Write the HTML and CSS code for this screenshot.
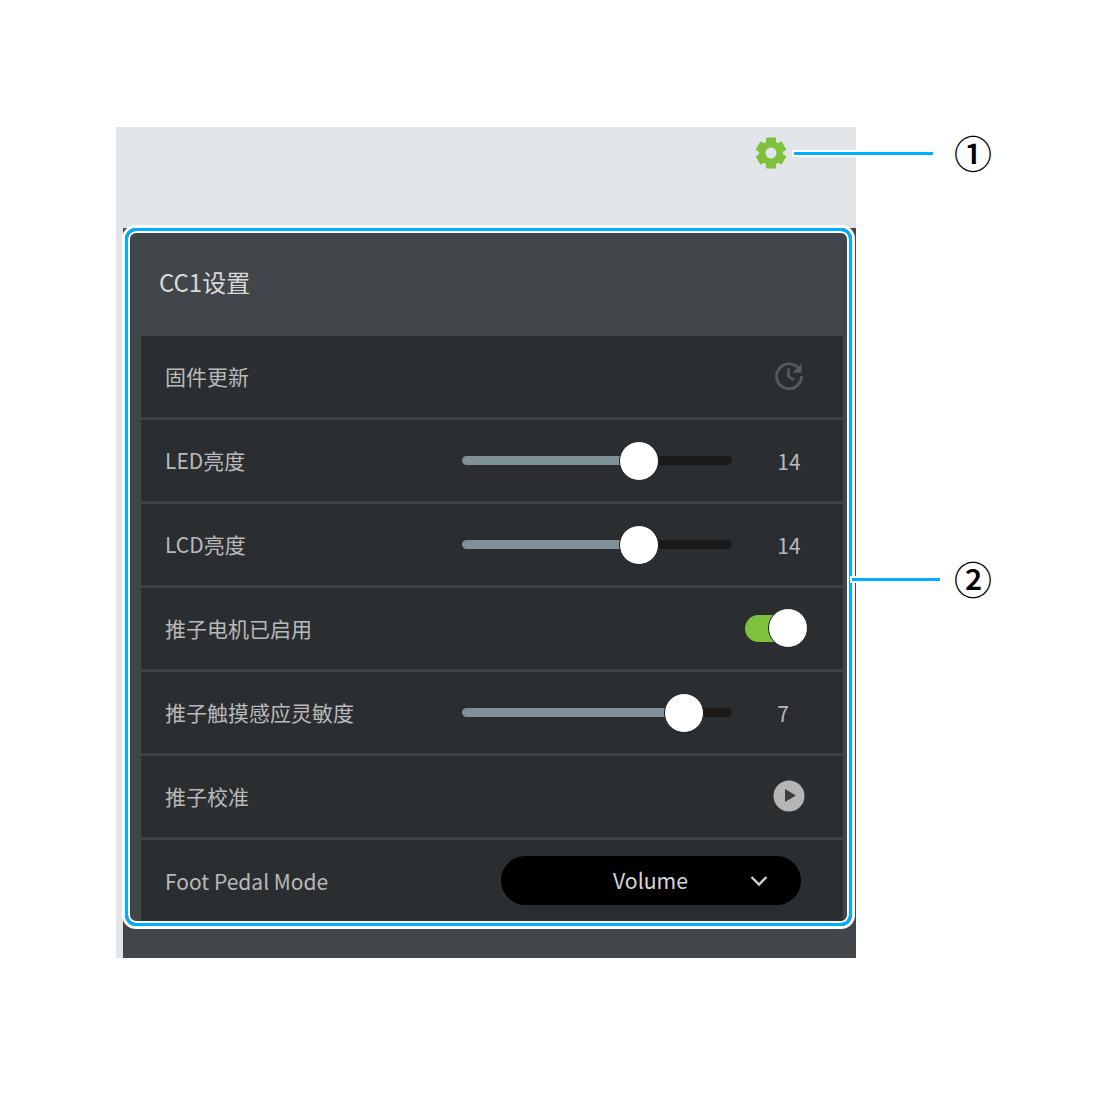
FILE: index.html
```html
<!DOCTYPE html>
<html lang="zh-CN">
    <head>
        <meta charset="UTF-8" />
        <title>CC1设置</title>
        <link rel="stylesheet" href="styles.css">
    </head>
    <body>
        <div class="pantalla">
            <div class="barra-superior">
                <svg class="engrane" viewBox="0 0 32 32">
                    <g fill="#7fc13c">
                        <circle cx="16" cy="16" r="12"/>
                        <rect x="11" y="0.500" width="10" height="31" rx="1"/>
                        <rect x="11" y="1" width="10" height="30" rx="1" transform="rotate(60 16 16)"/>
                        <rect x="11" y="1" width="10" height="30" rx="1" transform="rotate(120 16 16)"/>
                    </g>
                    <circle cx="16" cy="16" r="5.500" fill="#e2e5e8"/>
                </svg>
            </div>

            <div class="panel">
                <h1 class="titulo">CC1设置</h1>

                <div class="fila">
                    <span class="etiqueta">固件更新</span>
                    <svg class="icono-historial" viewBox="0 0 30 30">
                        <path d="M25.800 10.200A12.400 12.400 0 1 0 27.400 16" fill="none" stroke="#565a5d" stroke-width="2.800"/>
                        <path d="M27.700 3.500v9.300h-9.300z" fill="#565a5d"/>
                        <path d="M14.500 8.500v8l5.500 3.500" fill="none" stroke="#565a5d" stroke-width="2.600"/>
                    </svg>
                </div>

                <div class="fila">
                    <span class="etiqueta">LED亮度</span>
                    <div class="deslizador"><div class="relleno ancho-14"></div><div class="perilla"></div></div>
                    <span class="valor">14</span>
                </div>

                <div class="fila">
                    <span class="etiqueta">LCD亮度</span>
                    <div class="deslizador"><div class="relleno ancho-14"></div><div class="perilla"></div></div>
                    <span class="valor">14</span>
                </div>

                <div class="fila">
                    <span class="etiqueta">推子电机已启用</span>
                    <div class="interruptor"><div class="perilla"></div></div>
                </div>

                <div class="fila">
                    <span class="etiqueta">推子触摸感应灵敏度</span>
                    <div class="deslizador"><div class="relleno ancho-7"></div><div class="perilla"></div></div>
                    <span class="valor valor-corto">7</span>
                </div>

                <div class="fila">
                    <span class="etiqueta">推子校准</span>
                    <svg class="icono-play" viewBox="0 0 32 32">
                        <circle cx="16" cy="16" r="15.500" fill="#b5b5b5"/>
                        <path d="M12 9l11 6.500L12 22z" fill="#3a3d40"/>
                    </svg>
                </div>

                <div class="fila fila-ultima">
                    <span class="etiqueta">Foot Pedal Mode</span>
                    <div class="selector">
                        <span class="selector-texto">Volume</span>
                        <svg class="flecha" viewBox="0 0 18 12">
                            <path d="M1.500 2 9 9.500 16.500 2" fill="none" stroke="#d0d0d0" stroke-width="2.400"/>
                        </svg>
                    </div>
                </div>
            </div>
        </div>

        <!-- anotaciones -->
        <div class="marco"></div>
        <div class="linea linea-1"></div>
        <div class="linea linea-2"></div>
        <span class="numero numero-1">①</span>
        <span class="numero numero-2">②</span>
    </body>
</html>
```

FILE: styles.css
```css
* {
    box-sizing: border-box;
    margin: 0;
    padding: 0;
}

html {
    background: white;
}

body {
    position: relative;
    height: 1110px;
    overflow: hidden;
    font-family: "Noto Sans CJK SC", "Noto Sans", sans-serif;
}

.pantalla {
    display: flex;
    flex-direction: column;
    width: 740px;
    height: 831px;
    margin: 127px 0 0 116px;
    background: #e2e5e8;
}

.barra-superior {
    display: flex;
    justify-content: flex-end;
    flex-shrink: 0;
    height: 101px;
    padding: 10px 69px 0 0;
}

.engrane {
    width: 32px;
    height: 32px;
}

.panel {
    flex: 1;
    margin-left: 7px;
    padding: 7px 13px 0 18px;
    background: #41464a;
}

.titulo {
    height: 101px;
    margin-left: -18px;
    padding-left: 36px;
    font-size: 24px;
    font-weight: 400;
    line-height: 94px;
    color: #d9d9d9;
}

.fila {
    display: flex;
    align-items: center;
    height: 84px;
    padding: 0 34px 1px 24px;
    background: #2b2e31;
    border-bottom: 3px solid #3e4246;
}

.fila-ultima {
    height: 81px;
    padding: 0 42px 0 24px;
    border-bottom: none;
}

.etiqueta {
    margin-right: auto;
    font-size: 21px;
    color: #b9b9b9;
}

.valor {
    width: 40px;
    padding-top: 2px;
    font-size: 21px;
    text-align: center;
    color: #b9b9b9;
}

.valor-corto {
    padding-right: 12px;
}

.deslizador {
    position: relative;
    width: 270px;
    height: 9px;
    margin-right: 37px;
    background: #1a1a1a;
    border-radius: 5px;
}

.relleno {
    height: 100%;
    background: #7f9097;
    border-radius: 5px;
}

.ancho-14 {
    width: 177px;
}

.ancho-7 {
    width: 222px;
}

.perilla {
    position: absolute;
    top: -15px;
    width: 40px;
    height: 40px;
    background: white;
    border: 1px solid #1c1e20;
    border-radius: 50%;
}

.ancho-14 + .perilla {
    left: 157px;
}

.ancho-7 + .perilla {
    left: 202px;
}

.icono-historial {
    width: 30px;
    height: 30px;
    margin: 0 5px 2px 0;
}

.icono-play {
    width: 32px;
    height: 32px;
    margin-right: 4px;
}

.interruptor {
    position: relative;
    width: 50px;
    height: 27px;
    margin-right: 14px;
    background: #7fc13c;
    border-radius: 14px;
}

.interruptor .perilla {
    top: -7px;
    left: 23px;
}

.selector {
    display: flex;
    align-items: center;
    justify-content: space-between;
    width: 300px;
    height: 49px;
    padding: 0 33px 0 112px;
    background: black;
    border-radius: 25px;
}

.selector-texto {
    padding-bottom: 3px;
    font-size: 21.200px;
    color: #d6d6d6;
}

.flecha {
    width: 18px;
    height: 12px;
}

/* anotaciones */
.marco {
    position: absolute;
    top: 228px;
    left: 125px;
    width: 727px;
    height: 698px;
    border: 3px solid #00aeff;
    border-radius: 11px;
    box-shadow: 0 0 0 3px white, inset 0 0 0 2px white;
}

.linea {
    position: absolute;
    height: 3px;
    background: #00aeff;
    box-shadow: 0 0 0 2px white;
}

.linea-1 {
    top: 152px;
    left: 794px;
    width: 139px;
}

.linea-2 {
    top: 578px;
    left: 852px;
    width: 88px;
}

.numero {
    position: absolute;
    left: 954px;
    font-size: 38px;
    font-weight: 500;
    line-height: 38px;
    color: black;
}

.numero-1 {
    top: 133px;
}

.numero-2 {
    top: 559px;
}
```
